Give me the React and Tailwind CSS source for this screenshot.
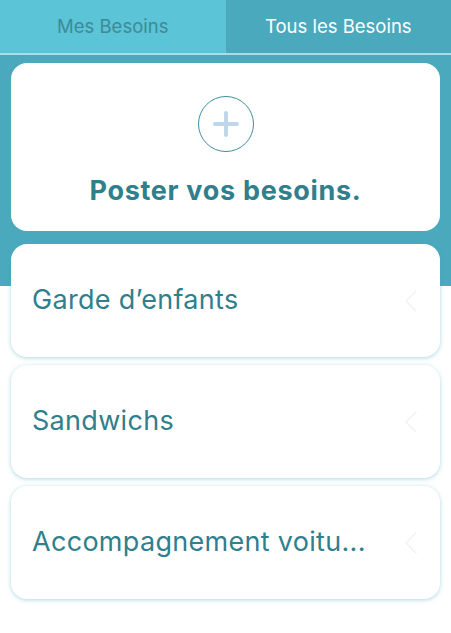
import React from 'react';

const needs = ['Garde d’enfants', 'Sandwichs', 'Accompagnement voitu...'];

const Chevron = () => (
  <svg width="14" height="24" viewBox="0 0 14 24" fill="none">
    <path d="M12 2L2 12l10 10" stroke="#eef3f6" strokeWidth="1.5" strokeLinecap="round" strokeLinejoin="round" />
  </svg>
);

const App = () => {
  return (
    <div className="w-[451px] h-[633px] bg-white overflow-hidden relative" style={{ fontFamily: 'Inter, "Noto Sans", sans-serif' }}>
      {/* teal backdrop behind header */}
      <div className="absolute inset-x-0 top-0 h-[286px] bg-[#4aa9bd]" />

      <div className="relative">
        {/* Tabs */}
        <div className="flex h-[55px] border-b-2 border-[#a6dde8]">
          <div className="flex-1 bg-[#5bc4d6] flex items-center justify-center text-[18.5px] text-[#3d8a98]">Mes Besoins</div>
          <div className="flex-1 bg-[#4aa9bd] flex items-center justify-center text-[18.5px] text-white">Tous les Besoins</div>
        </div>

        <div className="px-[11px] pt-[8px] flex flex-col gap-[8px]">
          {/* Post card */}
          <div className="h-[168px] bg-white rounded-[16px] flex flex-col items-center pt-[33px] mb-[5px]">
            <div className="w-[56px] h-[56px] rounded-full border border-[#3a8e9c] flex items-center justify-center">
              <svg width="32" height="32" viewBox="0 0 32 32">
                <path d="M16 5v22M5 16h22" stroke="#bfd7e8" strokeWidth="4" strokeLinecap="round" />
              </svg>
            </div>
            <div className="mt-[19px] text-[27px] font-bold tracking-[0.7px] text-[#2f7f8c]">Poster vos besoins.</div>
          </div>

          {needs.map((n) => (
            <div key={n} className="h-[113px] bg-white rounded-[16px] shadow-[0_1px_4px_rgba(74,169,189,0.45)] flex items-center justify-between pl-[21px] pr-[22px]">
              <span className="text-[27px] tracking-[0.3px] text-[#2f7f8c]">{n}</span>
              <Chevron />
            </div>
          ))}
        </div>
      </div>
    </div>
  );
};

export default App;
